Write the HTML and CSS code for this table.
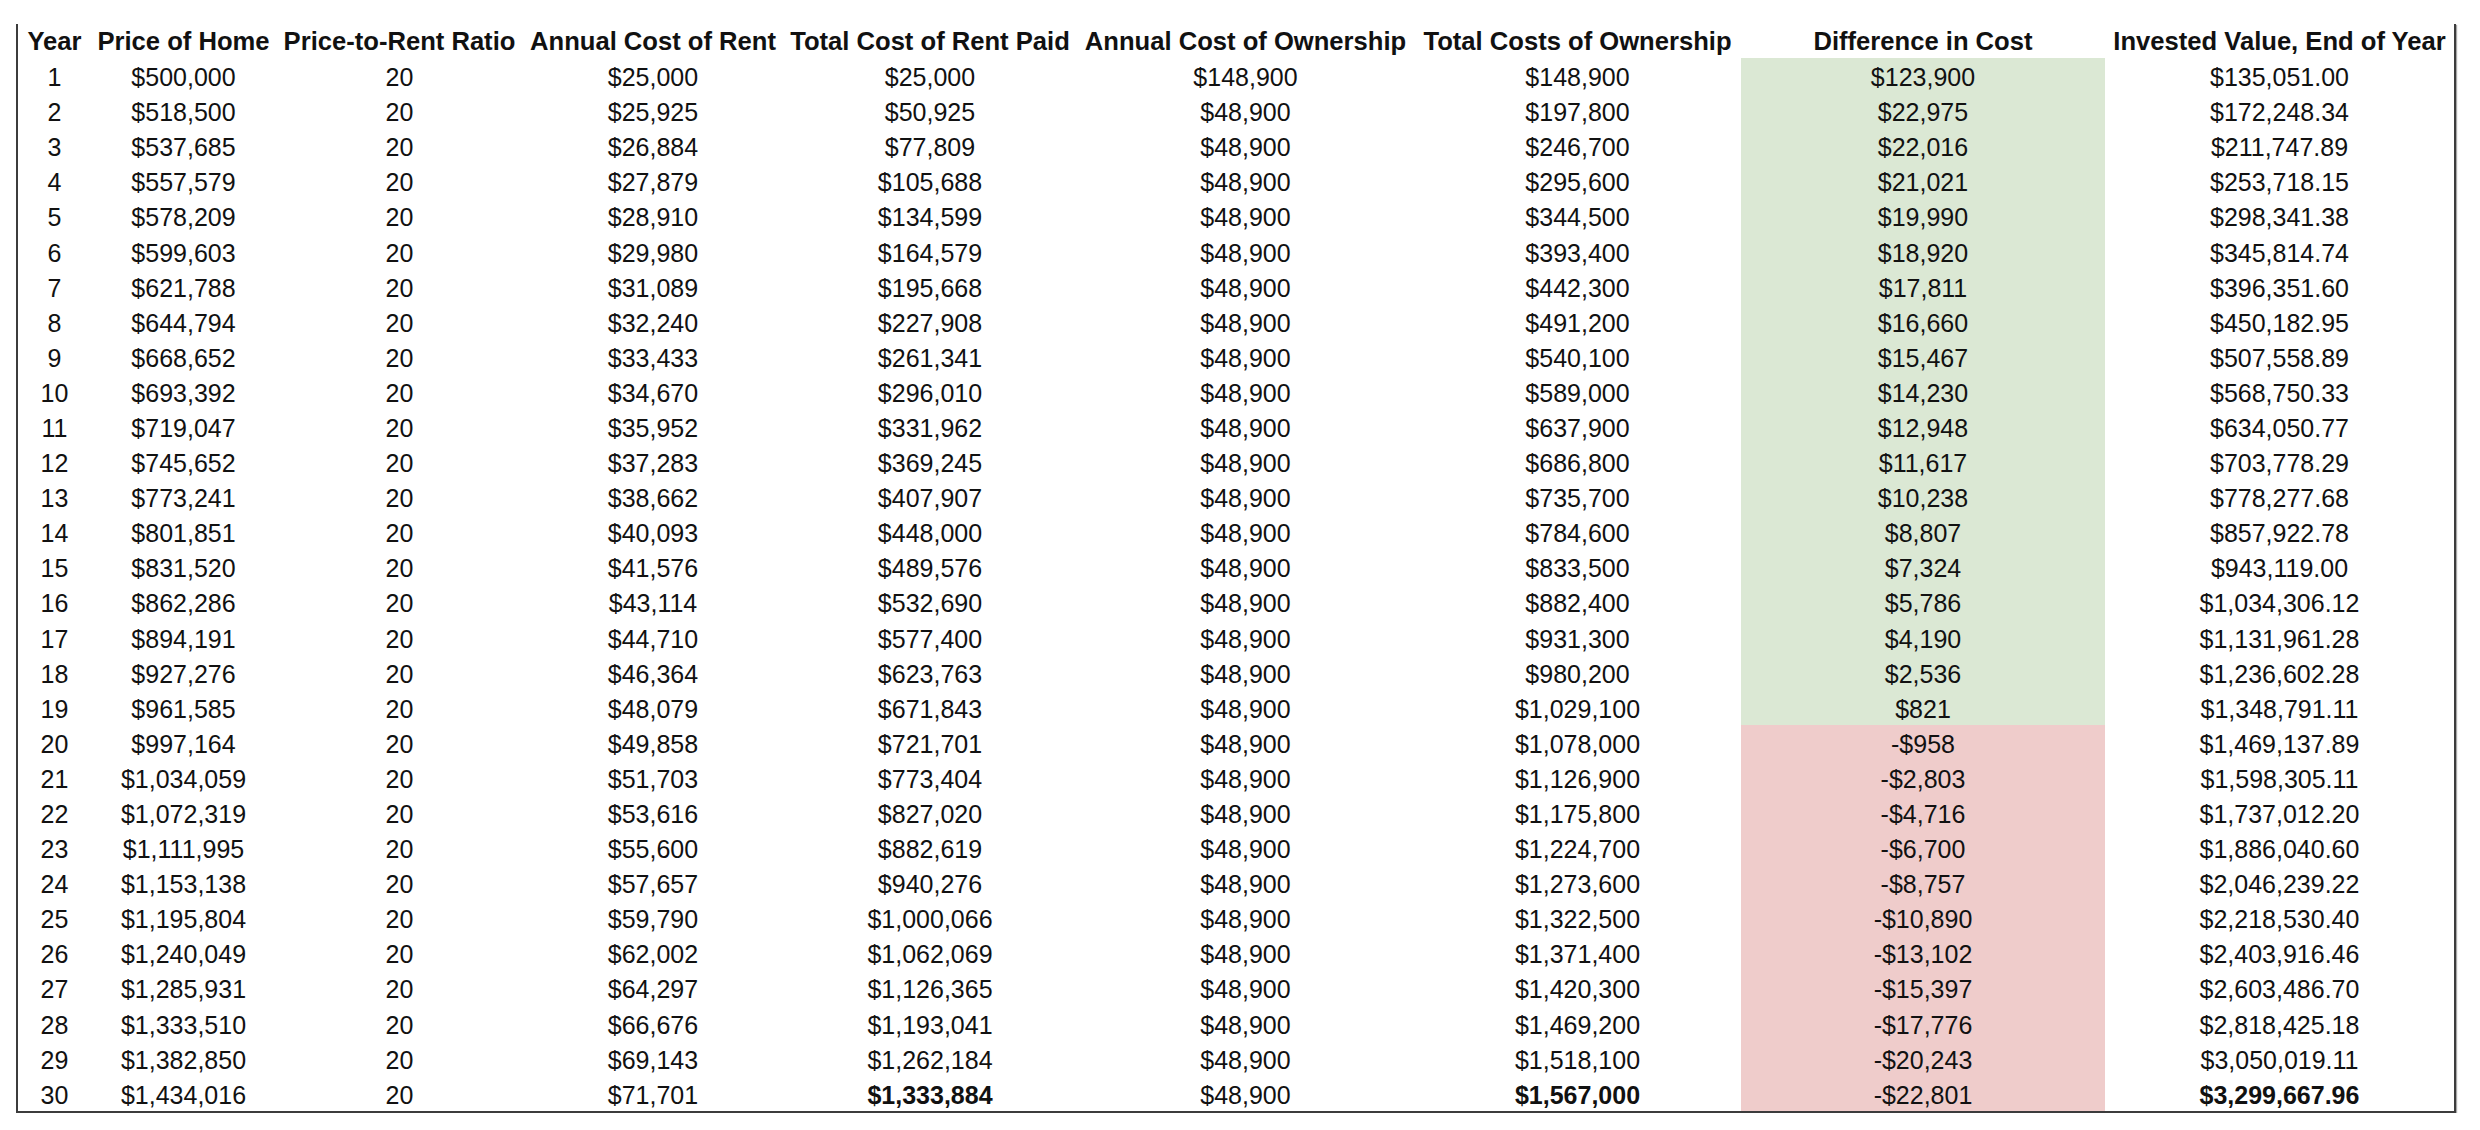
FILE: index.html
```html
<!DOCTYPE html>
<html>
<head>
<meta charset="utf-8">
<link rel="stylesheet" href="styles.css">
</head>
<body>
<div class="page">
<table class="sheet">
<colgroup>
<col class="c-year"><col class="c-price"><col class="c-ratio"><col class="c-arent"><col class="c-trent"><col class="c-aown"><col class="c-town"><col class="c-diff"><col class="c-inv">
</colgroup>
<thead>
<tr><th>Year</th><th>Price of Home</th><th>Price-to-Rent Ratio</th><th>Annual Cost of Rent</th><th>Total Cost of Rent Paid</th><th>Annual Cost of Ownership</th><th>Total Costs of Ownership</th><th>Difference in Cost</th><th>Invested Value, End of Year</th></tr>
</thead>
<tbody>
<tr><td>1</td><td>$500,000</td><td>20</td><td>$25,000</td><td>$25,000</td><td>$148,900</td><td>$148,900</td><td class="pos">$123,900</td><td>$135,051.00</td></tr>
<tr><td>2</td><td>$518,500</td><td>20</td><td>$25,925</td><td>$50,925</td><td>$48,900</td><td>$197,800</td><td class="pos">$22,975</td><td>$172,248.34</td></tr>
<tr><td>3</td><td>$537,685</td><td>20</td><td>$26,884</td><td>$77,809</td><td>$48,900</td><td>$246,700</td><td class="pos">$22,016</td><td>$211,747.89</td></tr>
<tr><td>4</td><td>$557,579</td><td>20</td><td>$27,879</td><td>$105,688</td><td>$48,900</td><td>$295,600</td><td class="pos">$21,021</td><td>$253,718.15</td></tr>
<tr><td>5</td><td>$578,209</td><td>20</td><td>$28,910</td><td>$134,599</td><td>$48,900</td><td>$344,500</td><td class="pos">$19,990</td><td>$298,341.38</td></tr>
<tr><td>6</td><td>$599,603</td><td>20</td><td>$29,980</td><td>$164,579</td><td>$48,900</td><td>$393,400</td><td class="pos">$18,920</td><td>$345,814.74</td></tr>
<tr><td>7</td><td>$621,788</td><td>20</td><td>$31,089</td><td>$195,668</td><td>$48,900</td><td>$442,300</td><td class="pos">$17,811</td><td>$396,351.60</td></tr>
<tr><td>8</td><td>$644,794</td><td>20</td><td>$32,240</td><td>$227,908</td><td>$48,900</td><td>$491,200</td><td class="pos">$16,660</td><td>$450,182.95</td></tr>
<tr><td>9</td><td>$668,652</td><td>20</td><td>$33,433</td><td>$261,341</td><td>$48,900</td><td>$540,100</td><td class="pos">$15,467</td><td>$507,558.89</td></tr>
<tr><td>10</td><td>$693,392</td><td>20</td><td>$34,670</td><td>$296,010</td><td>$48,900</td><td>$589,000</td><td class="pos">$14,230</td><td>$568,750.33</td></tr>
<tr><td>11</td><td>$719,047</td><td>20</td><td>$35,952</td><td>$331,962</td><td>$48,900</td><td>$637,900</td><td class="pos">$12,948</td><td>$634,050.77</td></tr>
<tr><td>12</td><td>$745,652</td><td>20</td><td>$37,283</td><td>$369,245</td><td>$48,900</td><td>$686,800</td><td class="pos">$11,617</td><td>$703,778.29</td></tr>
<tr><td>13</td><td>$773,241</td><td>20</td><td>$38,662</td><td>$407,907</td><td>$48,900</td><td>$735,700</td><td class="pos">$10,238</td><td>$778,277.68</td></tr>
<tr><td>14</td><td>$801,851</td><td>20</td><td>$40,093</td><td>$448,000</td><td>$48,900</td><td>$784,600</td><td class="pos">$8,807</td><td>$857,922.78</td></tr>
<tr><td>15</td><td>$831,520</td><td>20</td><td>$41,576</td><td>$489,576</td><td>$48,900</td><td>$833,500</td><td class="pos">$7,324</td><td>$943,119.00</td></tr>
<tr><td>16</td><td>$862,286</td><td>20</td><td>$43,114</td><td>$532,690</td><td>$48,900</td><td>$882,400</td><td class="pos">$5,786</td><td>$1,034,306.12</td></tr>
<tr><td>17</td><td>$894,191</td><td>20</td><td>$44,710</td><td>$577,400</td><td>$48,900</td><td>$931,300</td><td class="pos">$4,190</td><td>$1,131,961.28</td></tr>
<tr><td>18</td><td>$927,276</td><td>20</td><td>$46,364</td><td>$623,763</td><td>$48,900</td><td>$980,200</td><td class="pos">$2,536</td><td>$1,236,602.28</td></tr>
<tr><td>19</td><td>$961,585</td><td>20</td><td>$48,079</td><td>$671,843</td><td>$48,900</td><td>$1,029,100</td><td class="pos">$821</td><td>$1,348,791.11</td></tr>
<tr><td>20</td><td>$997,164</td><td>20</td><td>$49,858</td><td>$721,701</td><td>$48,900</td><td>$1,078,000</td><td class="neg">-$958</td><td>$1,469,137.89</td></tr>
<tr><td>21</td><td>$1,034,059</td><td>20</td><td>$51,703</td><td>$773,404</td><td>$48,900</td><td>$1,126,900</td><td class="neg">-$2,803</td><td>$1,598,305.11</td></tr>
<tr><td>22</td><td>$1,072,319</td><td>20</td><td>$53,616</td><td>$827,020</td><td>$48,900</td><td>$1,175,800</td><td class="neg">-$4,716</td><td>$1,737,012.20</td></tr>
<tr><td>23</td><td>$1,111,995</td><td>20</td><td>$55,600</td><td>$882,619</td><td>$48,900</td><td>$1,224,700</td><td class="neg">-$6,700</td><td>$1,886,040.60</td></tr>
<tr><td>24</td><td>$1,153,138</td><td>20</td><td>$57,657</td><td>$940,276</td><td>$48,900</td><td>$1,273,600</td><td class="neg">-$8,757</td><td>$2,046,239.22</td></tr>
<tr><td>25</td><td>$1,195,804</td><td>20</td><td>$59,790</td><td>$1,000,066</td><td>$48,900</td><td>$1,322,500</td><td class="neg">-$10,890</td><td>$2,218,530.40</td></tr>
<tr><td>26</td><td>$1,240,049</td><td>20</td><td>$62,002</td><td>$1,062,069</td><td>$48,900</td><td>$1,371,400</td><td class="neg">-$13,102</td><td>$2,403,916.46</td></tr>
<tr><td>27</td><td>$1,285,931</td><td>20</td><td>$64,297</td><td>$1,126,365</td><td>$48,900</td><td>$1,420,300</td><td class="neg">-$15,397</td><td>$2,603,486.70</td></tr>
<tr><td>28</td><td>$1,333,510</td><td>20</td><td>$66,676</td><td>$1,193,041</td><td>$48,900</td><td>$1,469,200</td><td class="neg">-$17,776</td><td>$2,818,425.18</td></tr>
<tr><td>29</td><td>$1,382,850</td><td>20</td><td>$69,143</td><td>$1,262,184</td><td>$48,900</td><td>$1,518,100</td><td class="neg">-$20,243</td><td>$3,050,019.11</td></tr>
<tr><td>30</td><td>$1,434,016</td><td>20</td><td>$71,701</td><td class="total">$1,333,884</td><td>$48,900</td><td class="total">$1,567,000</td><td class="neg">-$22,801</td><td class="total">$3,299,667.96</td></tr>
</tbody>
</table>
</div>
</body>
</html>
```

FILE: styles.css
```css
html, body {
  margin: 0;
  padding: 0;
  background: #ffffff;
}

.page {
  padding: 24px 0 0 16px;
}

.sheet {
  table-layout: fixed;
  width: 2440px;
  border-collapse: separate;
  border-spacing: 0;
  border-left: 2px solid #3c3c3c;
  border-right: 2px solid #3c3c3c;
  border-bottom: 2px solid #3c3c3c;
  box-shadow: 1px 1px 1px #a8a8a8;
  font-family: "Liberation Sans", Arial, Helvetica, sans-serif;
  font-size: 25px;
  color: #111111;
}

.c-year { width: 73px; }
.c-price { width: 185px; }
.c-ratio { width: 247px; }
.c-arent { width: 260px; }
.c-trent { width: 294px; }
.c-aown { width: 337px; }
.c-town { width: 327px; }
.c-diff { width: 364px; }
.c-inv { width: 349px; }

.sheet th {
  height: 34px;
  padding: 0;
  font-size: 25.6px;
  font-weight: bold;
  text-align: center;
  vertical-align: middle;
  white-space: nowrap;
  line-height: 34px;
}

.sheet td {
  height: 32.1px;
  padding: 3px 0 0 0;
  text-align: center;
  vertical-align: middle;
  white-space: nowrap;
  line-height: 30px;
}

.sheet td.pos {
  background: #dbe8d4;
}

.sheet td.neg {
  background: #efcccb;
}

.sheet td.total {
  font-weight: bold;
}
```
